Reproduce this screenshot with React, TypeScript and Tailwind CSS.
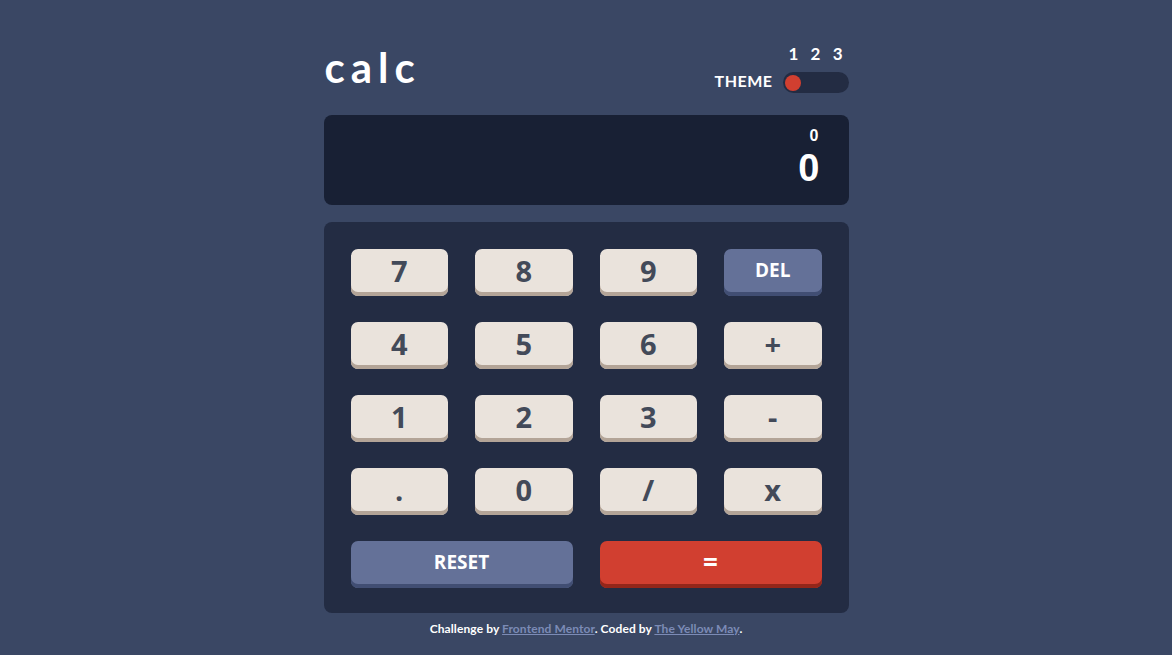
import React, { useState } from 'react';

type Key = { label: string; kind: 'num' | 'del' | 'reset' | 'eq'; span?: boolean };

const keys: Key[] = [
  { label: '7', kind: 'num' },
  { label: '8', kind: 'num' },
  { label: '9', kind: 'num' },
  { label: 'DEL', kind: 'del' },
  { label: '4', kind: 'num' },
  { label: '5', kind: 'num' },
  { label: '6', kind: 'num' },
  { label: '+', kind: 'num' },
  { label: '1', kind: 'num' },
  { label: '2', kind: 'num' },
  { label: '3', kind: 'num' },
  { label: '-', kind: 'num' },
  { label: '.', kind: 'num' },
  { label: '0', kind: 'num' },
  { label: '/', kind: 'num' },
  { label: 'x', kind: 'num' },
  { label: 'RESET', kind: 'reset', span: true },
  { label: '=', kind: 'eq', span: true },
];

const keyClass = (k: Key) => {
  if (k.kind === 'del' || k.kind === 'reset')
    return 'bg-[#647198] text-white text-[19px] shadow-[inset_0_-4px_0_#414e73]';
  if (k.kind === 'eq') return 'bg-[#d13f30] text-white text-[26px] shadow-[inset_0_-4px_0_#93261a]';
  return 'bg-[#eae3dc] text-[#434a59] text-[29px] shadow-[inset_0_-4px_0_#b3a497]';
};

const App: React.FC = () => {
  const [display] = useState('0');

  return (
    <div className="min-h-[655px] w-full bg-[#3a4764] font-['Lato',sans-serif]">
      <div className="mx-auto w-[525px] pt-[45px]">
        <div className="flex items-end justify-between">
          <h1 className="text-[42px] font-bold leading-none text-white pl-[1px] pb-[5px] tracking-[6px]">calc</h1>
          <div className="flex items-end gap-[10px]">
            <span className="text-[16px] font-bold text-white tracking-[0.5px] leading-none pb-[4px]">THEME</span>
            <div className="flex flex-col">
              <div className="flex justify-between px-[6px] pb-[10px] text-[17px] font-bold leading-none text-white">
                <span>1</span>
                <span>2</span>
                <span>3</span>
              </div>
              <div className="flex h-[21px] w-[66px] items-center rounded-full bg-[#232c43] px-[2px]">
                <span className="h-[16px] w-[16px] rounded-full bg-[#d13f30]" />
              </div>
            </div>
          </div>
        </div>

        <div className="mt-[22px] flex h-[90px] flex-col items-end rounded-[8px] bg-[#182034] pt-[12px] pr-[29px] text-white font-['Liberation_Sans',sans-serif] font-bold">
          <span className="text-[16px] leading-[18px] pr-[1px]">{display}</span>
          <span className="mt-[2px] text-[38px] leading-[42px]">{display}</span>
        </div>

        <div className="mt-[17px] grid grid-cols-4 gap-x-[27px] gap-y-[26px] rounded-[8px] bg-[#232c43] px-[27px] pt-[27px] pb-[25px]">
          {keys.map((k) => (
            <button
              key={k.label}
              className={`flex h-[47px] items-center justify-center rounded-[7px] pb-[4px] font-['Open_Sans',sans-serif] font-bold ${keyClass(k)} ${k.span ? 'col-span-2' : ''}`}
            >
              {k.label}
            </button>
          ))}
        </div>

        <p className="mt-[7px] text-center text-[12px] font-bold text-white tracking-[0.1px]">
          Challenge by{' '}
          <a className="text-[#7c8bb6] underline" href="#">
            Frontend Mentor
          </a>
          . Coded by{' '}
          <a className="text-[#7c8bb6] underline" href="#">
            The Yellow May
          </a>
          .
        </p>
      </div>
    </div>
  );
};

export default App;
